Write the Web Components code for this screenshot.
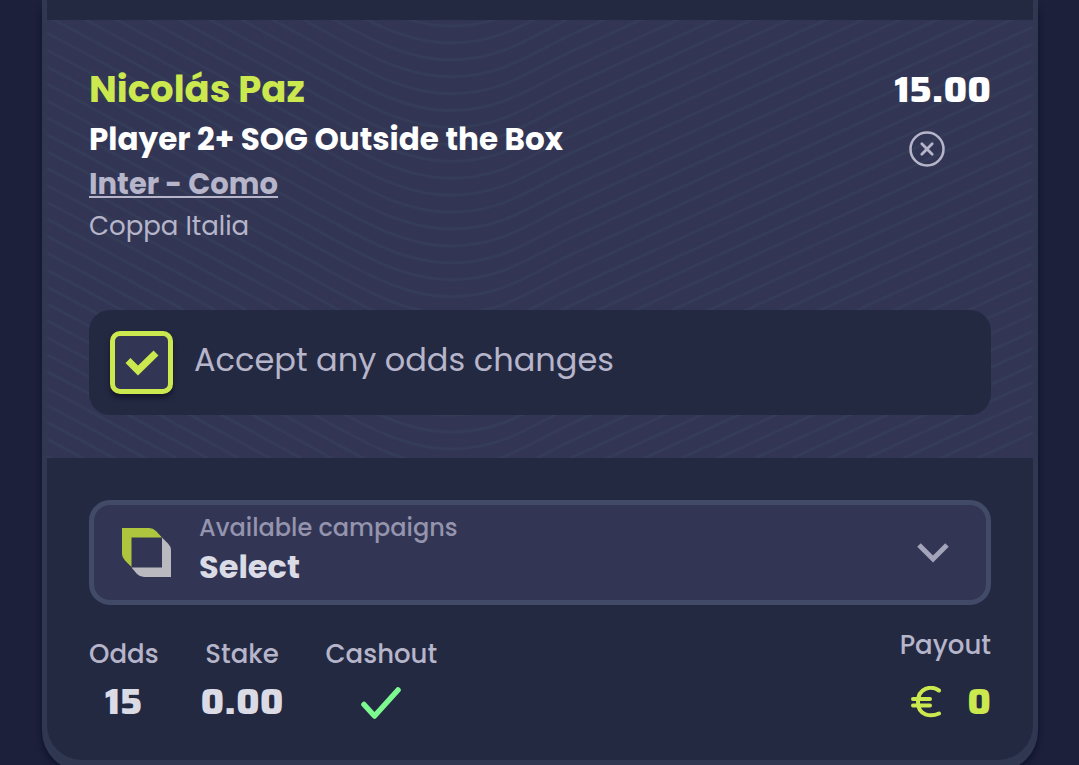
<!DOCTYPE html>
<html lang="en">
<head>
<meta charset="utf-8">
<meta name="viewport" content="width=device-width, initial-scale=1">
<title>Bet slip</title>
<style>
  :root {
    --page: #1c203a; --dark: #242942; --panel: #323654; --edge: #303751; --field-edge: #414b68;
    --muted: #b6b5ca; --soft: #9594ae; --bright: #dbdbe6; --lime: #cce84f;
    --digits: "Saira", "Exo 2", "Play", "Changa", Poppins, Inter, sans-serif;
  }
  body { margin: 0; background: var(--page); color: var(--muted); font-family: Poppins, Inter, sans-serif; }
</style>
</head>
<body>
<bet-slip>
  <bet-selection slot="selections" odds="15.00">
    <span slot="outcome">Nicolás Paz</span>
    <span slot="market">Player 2+ SOG Outside the Box</span>
    <span slot="event">Inter - Como</span>
    <span slot="league">Coppa Italia</span>
    <odds-consent slot="consent">Accept any odds changes</odds-consent>
  </bet-selection>
  <campaign-picker slot="footer"></campaign-picker>
  <slip-totals slot="footer">
    <slip-figure label="Odds">15</slip-figure>
    <slip-figure label="Stake">0.00</slip-figure>
    <slip-figure label="Cashout">
      <svg width="40" height="34" viewBox="0 0 40 34" fill="none" stroke="#7dfa8f" stroke-width="5.500" stroke-linecap="round" stroke-linejoin="round" role="img" aria-label="Available"><path d="M3 19.500L13.500 31L37 5"/></svg>
    </slip-figure>
    <slip-figure label="Payout" slot="payout" payout>
      <svg width="32" height="32" viewBox="0 0 32 32" fill="none" stroke="#cce84f" stroke-width="4" stroke-linecap="round" role="img" aria-label="Euro"><path d="M29 4.500C21 -1 8 2 8 16S21 31 29 27.500M3 13H20M3 19.500H20"/></svg>
      <span>0</span>
    </slip-figure>
  </slip-totals>
</bet-slip>
<script>
const define = (name, markup, setup) => customElements.define(name, class extends HTMLElement {
  connectedCallback() {
    if (this.shadowRoot) return;
    const root = this.attachShadow({ mode: 'open' });
    root.innerHTML = markup;
    if (setup) setup(this, root);
  }
});

define('bet-slip', `
<style>
  :host { display: block; padding: 0 41px 0 42px; }
  article { border: solid var(--edge); border-width: 0 5px 5px; border-radius: 0 0 40px 40px; padding-top: 20px;
    background: var(--dark); box-shadow: 0 6px 0 var(--edge), 0 10px 6px #10122a; }
  footer { display: flex; flex-direction: column; gap: 24px; padding: 42px 42px 36px; }
</style>
<article><slot name="selections"></slot><footer><slot name="footer"></slot></footer></article>`);

define('bet-selection', `
<style>
  :host { display: block; position: relative; overflow: hidden; background: var(--panel); }
  .waves { position: absolute; inset: 0; width: 100%; height: 100%; }
  .body { position: relative; padding: 42px 42px 43px; }
  .top { display: flex; justify-content: space-between; }
  h2, h3, p { margin: 0; }
  h2 { font-size: 37px; line-height: 54px; font-weight: 700; color: var(--lime); }
  h3 { font-size: 31px; line-height: 46px; font-weight: 700; color: #fff; }
  .event { font-size: 29px; line-height: 45px; font-weight: 700; }
  .league { font-size: 26px; line-height: 39px; }
  a { color: inherit; text-decoration: underline; text-decoration-thickness: 2px; text-underline-offset: 2px; text-decoration-skip-ink: none; }
  .side { display: flex; flex-direction: column; align-items: center; gap: 13px; }
  .odds { font: 800 36px/56px var(--digits); color: #fff; }
  button { display: block; padding: 0; border: 0; background: none; color: var(--muted); margin-right: 32px; cursor: pointer; }
  button svg { display: block; }
  .consent { margin-top: 64px; }
</style>
<svg class="waves" viewBox="0 0 986 438" preserveAspectRatio="xMidYMin slice" fill="none" stroke="#343c58" stroke-width="3" aria-hidden="true"></svg>
<div class="body">
  <div class="top">
    <div>
      <h2><slot name="outcome"></slot></h2>
      <h3><slot name="market"></slot></h3>
      <p class="event"><a href="#event"><slot name="event"></slot></a></p>
      <p class="league"><slot name="league"></slot></p>
    </div>
    <div class="side">
      <span class="odds"></span>
      <button type="button" aria-label="Remove selection">
        <svg width="36" height="36" viewBox="0 0 36 36" fill="none" stroke="currentColor" stroke-linecap="round"><circle cx="18" cy="18" r="16.500" stroke-width="2.500"/><path d="M12.800 12.800L23.200 23.200M23.200 12.800L12.800 23.200" stroke-width="2.800"/></svg>
      </button>
    </div>
  </div>
  <div class="consent"><slot name="consent"></slot></div>
</div>`, (host, root) => {
  root.querySelector('.odds').textContent = host.getAttribute('odds');
  const wave = 'M0 -196L34 -178L253 -59C308 -29 353 0 404 0S483 -23 524 -42L986 -253';
  root.querySelector('.waves').innerHTML = Array.from({ length: 40 }, (_, i) =>
    `<path transform="translate(0 ${(6 + i * 16.92).toFixed(2)})" d="${wave}"/>`).join('');
});

define('odds-consent', `
<style>
  :host { display: block; }
  label { display: flex; align-items: center; gap: 21px; padding: 21px; border-radius: 21px; background: var(--dark); font-size: 32px; }
  .box { display: grid; width: 63px; height: 63px; }
  .box > * { grid-area: 1 / 1; }
  input { appearance: none; box-sizing: border-box; width: 63px; height: 63px; margin: 0; border: 5px solid var(--lime); border-radius: 10px;
    background: var(--panel); box-shadow: 0 4px 5px #15172a; }
  svg { place-self: center; pointer-events: none; }
  input:not(:checked) + svg { visibility: hidden; }
  .text { line-height: 58px; align-self: flex-start; }
</style>
<label><span class="box"><input type="checkbox" checked><svg width="34" height="26" viewBox="0 0 34 26" fill="none" stroke="#cce84f" stroke-width="7" aria-hidden="true"><path d="M3 10.500L13 20.500L31 3"/></svg></span><span class="text"><slot></slot></span></label>`);

define('campaign-picker', `
<style>
  :host { display: block; }
  .field { box-sizing: border-box; display: flex; align-items: center; gap: 28px; height: 105px; padding: 0 37px 0 28px;
    border: 5px solid var(--field-edge); border-radius: 21px; background: var(--panel); }
  .text { flex: 1; display: flex; flex-direction: column; padding-bottom: 8px; }
  label { font-size: 24px; line-height: 36px; font-weight: 500; color: var(--soft); }
  select { appearance: none; width: 100%; height: 42px; padding: 0; border: 0; background: none; color: var(--bright); font: 700 32px/42px Poppins, Inter, sans-serif; }
</style>
<div class="field">
  <svg width="49" height="49" viewBox="0 0 49 49" aria-hidden="true"><path fill="#adc63e" d="M0 0H27Q31 0 34 3L40 9.500H9.500V39L3 32.500Q0 29.500 0 26Z"/><path fill="#b9b9bf" d="M40 9.500L46 15.500Q49 18.500 49 22V49H22Q18 49 15 46L9.500 39.500H40Z"/></svg>
  <div class="text"><label for="campaign">Available campaigns</label><select id="campaign"><option>Select</option></select></div>
  <svg width="32" height="22" viewBox="0 0 32 22" fill="none" stroke="#a3a3b9" stroke-width="5" aria-hidden="true"><path d="M2 3L16 17L30 3"/></svg>
</div>`);

define('slip-totals', `
<style>
  :host { display: flex; justify-content: space-between; }
  .figures { display: flex; gap: 42px; }
</style>
<div class="figures"><slot></slot></div><slot name="payout"></slot>`);

define('slip-figure', `
<style>
  :host { display: flex; flex-direction: column; align-items: center; }
  .label { font-size: 26px; line-height: 50px; font-weight: 500; }
  .value { display: flex; align-items: center; gap: 25px; height: 45px; font: 800 36px/45px var(--digits); color: var(--bright); }
  :host([payout]) { align-items: flex-end; }
  :host([payout]) .label { line-height: 32px; margin-bottom: 18px; }
  :host([payout]) .value { color: var(--lime); }
</style>
<span class="label"></span><span class="value"><slot></slot></span>`, (host, root) => {
  root.querySelector('.label').textContent = host.getAttribute('label');
});
</script>
</body>
</html>
